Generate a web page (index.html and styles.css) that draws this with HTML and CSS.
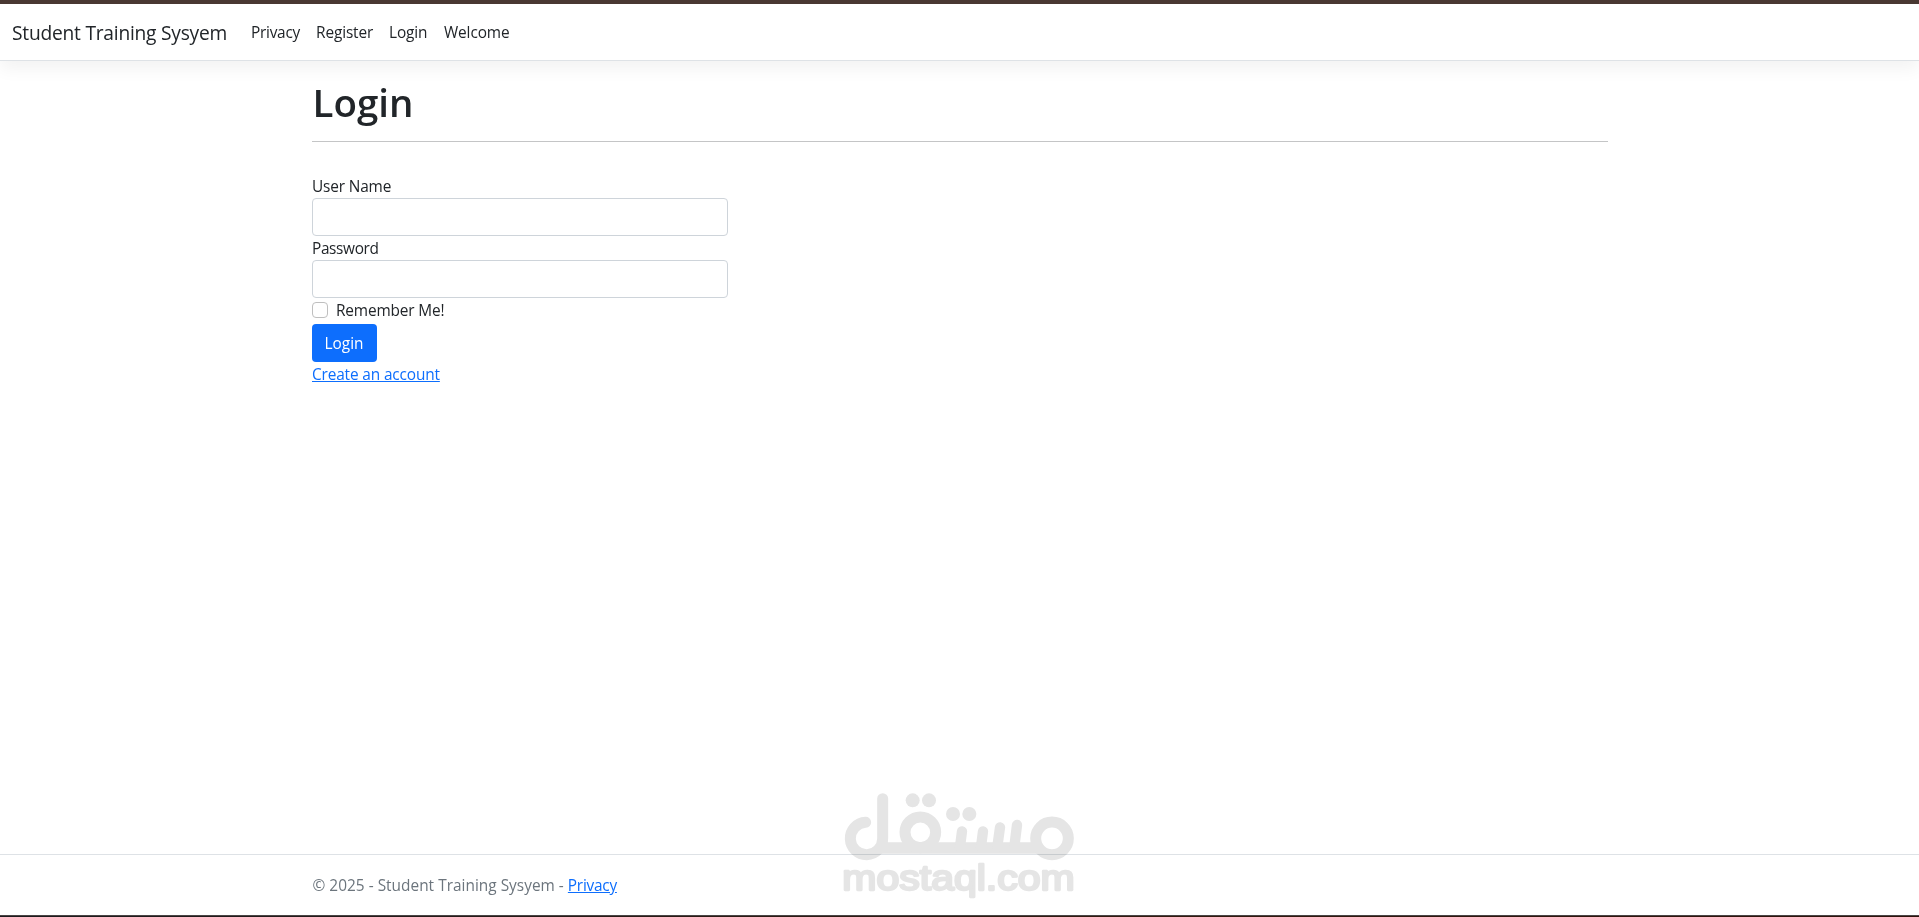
FILE: index.html
```html
<!DOCTYPE html>
<html lang="en">
<head>
<meta charset="utf-8">
<title>Login - Student Training Sysyem</title>
<link rel="stylesheet" href="styles.css">
</head>
<body>
<header class="header">
  <nav class="navbar">
    <a class="brand" href="#">Student Training Sysyem</a>
    <ul class="nav">
      <li><a class="nav-link privacy" href="#">Privacy</a></li>
      <li><a class="nav-link register" href="#">Register</a></li>
      <li><a class="nav-link login" href="#">Login</a></li>
      <li><a class="nav-link welcome" href="#">Welcome</a></li>
    </ul>
  </nav>
</header>
<main class="container main">
  <h1>Login</h1>
  <hr>
  <form class="form">
    <label class="lbl" for="user">User Name</label>
    <input class="control" id="user" type="text">
    <label class="lbl lbl-pass" for="pass">Password</label>
    <input class="control" id="pass" type="password">
    <label class="check"><input type="checkbox"><span>Remember Me!</span></label>
    <button class="btn" type="button">Login</button>
    <a class="link create" href="#">Create an account</a>
  </form>
</main>
<footer class="footer">
  <div class="container">© 2025 - Student Training Sysyem - <a class="link" href="#">Privacy</a></div>
</footer>
<div class="edge"></div>
<svg class="watermark" viewBox="0 0 780 411" width="260" height="137" aria-hidden="true">
  <g fill="none" stroke="#e5e5e5" stroke-width="33" stroke-linecap="round">
    <path d="M107 127A48.500 48.500 0 1 0 158 175V56"/>
    <path d="M150 204H630" stroke-width="34" stroke-linecap="butt"/>
    <circle cx="271" cy="157" r="46"/>
    <circle cx="666" cy="175" r="49"/>
    <path d="M396 154L390 200M459 154L453 200M510 142L502 200M561 135L553 200" stroke-width="31"/>
  </g>
  <g fill="#e5e5e5">
    <circle cx="248" cy="61" r="21"/><circle cx="297" cy="61" r="21"/>
    <circle cx="369" cy="102" r="21"/><circle cx="418" cy="102" r="21"/>
    <text x="37" y="329" textLength="697" lengthAdjust="spacingAndGlyphs">mostaql.com</text>
  </g>
</svg>
</body>
</html>
```
FILE: styles.css
```css
* { box-sizing: border-box; }
html { height: 917px; overflow: hidden; }
body {
  margin: 0;
  height: 917px;
  display: flex;
  flex-direction: column;
  position: relative;
  overflow: hidden;
  border-top: 4px solid #493832;
  background: #fff;
  color: #212529;
  font: 15.4px/24px "Open Sans", "Noto Sans", sans-serif;
}
.navbar {
  display: flex;
  align-items: center;
  height: 57px;
  padding: 0 12px;
  border-bottom: 1px solid #dee2e6;
  box-shadow: 0 8px 16px rgba(0, 0, 0, .05);
}
.brand {
  width: 215px;
  margin-right: 16px;
  padding-top: 2px;
  color: #212529;
  font-size: 19.2px;
  line-height: 30px;
  letter-spacing: -.23px;
  text-decoration: none;
  white-space: nowrap;
}
.nav { display: flex; margin: 0; padding: 0; list-style: none; letter-spacing: -.12px; }
.nav-link { display: block; padding: 9px 8px 7px; color: #212529; text-decoration: none; white-space: nowrap; }
.privacy { width: 65px; letter-spacing: -.25px; }
.register { width: 73px; }
.login { width: 55px; }
.container { width: 1320px; margin: 0 auto; padding: 0 12px; }
.main { flex: 1; margin-top: 16px; }
h1 { margin: 0; padding: 1px 0 0 1px; height: 48px; font-size: 38.5px; line-height: 48px; font-weight: 600; }
hr { height: 1px; margin: 16px 0 32px; border: 0; background: #c4c5c6; }
.form { display: flex; flex-direction: column; align-items: flex-start; width: 416px; letter-spacing: -.15px; }
.lbl { height: 24px; padding: 1px 0 0 .5px; }
.lbl-pass { letter-spacing: -.35px; }
.control {
  width: 416px;
  height: 38px;
  padding: 6px 12px;
  border: 1px solid #ced4da;
  border-radius: 4px;
  background: #fff;
  font: inherit;
}
.check { display: flex; gap: 8px; height: 26px; }
.check span { padding: 1px 0 0 .5px; }
.check input {
  appearance: none;
  width: 16px;
  height: 16px;
  margin: 4px 0 0;
  border: 1px solid #bfbfbf;
  border-radius: 4px;
  background: #fff;
}
.btn {
  height: 38px;
  width: 65px;
  padding: 1px 0 0;
  border: 0;
  border-radius: 4px;
  background: #0d6efd;
  color: #fff;
  font: inherit;
}
.link { color: #0d6efd; text-decoration: underline; }
.create { padding: 1px 0 0 .5px; letter-spacing: -.14px; }
.footer {
  height: 61px;
  border-top: 1px solid #dee2e6;
  color: #6c757d;
  line-height: 61px;
  letter-spacing: .02px;
}
.footer .container { padding-left: 13px; }
.footer .link { letter-spacing: -.25px; }
.edge {
  height: 2px;
  border-top: 1px solid #4a4545;
  background: linear-gradient(90deg, #1d1a1d, #33190f 60%, #2e120b);
}
.watermark { position: absolute; left: 830px; top: 776px; mix-blend-mode: multiply; pointer-events: none; }
.watermark text {
  font: 104px "Liberation Sans", Arial, sans-serif;
  stroke: #e5e5e5;
  stroke-width: 7px;
  stroke-linejoin: round;
}
```
